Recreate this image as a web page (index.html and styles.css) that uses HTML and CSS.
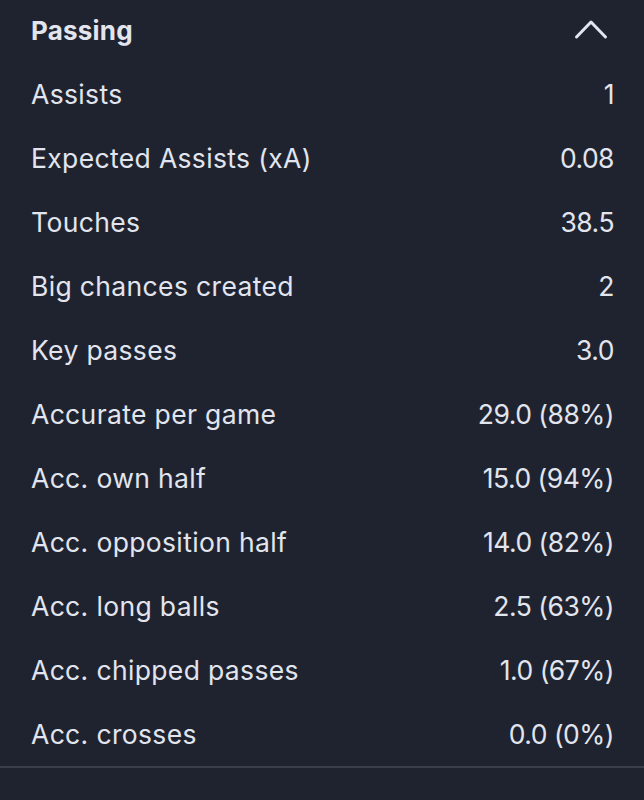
FILE: index.html
```html
<!DOCTYPE html>
<html lang="en">
<head>
<meta charset="utf-8">
<title>Passing</title>
<link rel="stylesheet" href="styles.css">
</head>
<body>
<section class="panel">
  <header class="panel-head">
    <h2 class="panel-title">Passing</h2>
    <svg class="chevron" width="34" height="24" viewBox="0 0 34 24" aria-hidden="true">
      <path d="M2.5 20 L17 5 L31.5 20" fill="none" stroke="#e2e5ee" stroke-width="3" stroke-linecap="round" stroke-linejoin="round"/>
    </svg>
  </header>
  <ul class="stats">
    <li class="stat"><span>Assists</span><span class="val">1</span></li>
    <li class="stat"><span>Expected Assists (xA)</span><span class="val">0.08</span></li>
    <li class="stat"><span>Touches</span><span class="val">38.5</span></li>
    <li class="stat"><span>Big chances created</span><span class="val">2</span></li>
    <li class="stat"><span>Key passes</span><span class="val">3.0</span></li>
    <li class="stat"><span>Accurate per game</span><span class="val">29.0 (88%)</span></li>
    <li class="stat"><span>Acc. own half</span><span class="val">15.0 (94%)</span></li>
    <li class="stat"><span>Acc. opposition half</span><span class="val">14.0 (82%)</span></li>
    <li class="stat"><span>Acc. long balls</span><span class="val">2.5 (63%)</span></li>
    <li class="stat"><span>Acc. chipped passes</span><span class="val">1.0 (67%)</span></li>
    <li class="stat"><span>Acc. crosses</span><span class="val">0.0 (0%)</span></li>
  </ul>
  <div class="divider"></div>
</section>
</body>
</html>
```
FILE: styles.css
```css
html, body {
  margin: 0;
  padding: 0;
  background: #1f2330;
}
body {
  font-family: Inter, "Noto Sans", "Liberation Sans", sans-serif;
  color: #e2e5ee;
  height: 800px;
  overflow: hidden;
}
.panel {
  display: flex;
  flex-direction: column;
}
.panel-head {
  height: 62px;
  padding: 0 36px 2px 31px;
  box-sizing: border-box;
  display: flex;
  align-items: center;
  justify-content: space-between;
}
.panel-title {
  margin: 0;
  font-size: 26px;
  font-weight: 700;
  letter-spacing: 0.2px;
}
.chevron {
  display: block;
  margin-bottom: 2px;
}
.stats {
  list-style: none;
  margin: 0;
  padding: 0 30px 0 31px;
}
.stat {
  height: 64px;
  display: flex;
  align-items: center;
  justify-content: space-between;
  font-size: 26.5px;
  font-weight: 400;
  letter-spacing: 0.35px;
}
.val {
  letter-spacing: -0.5px;
}
.divider {
  height: 2px;
  background: #3a3f4c;
}
```
